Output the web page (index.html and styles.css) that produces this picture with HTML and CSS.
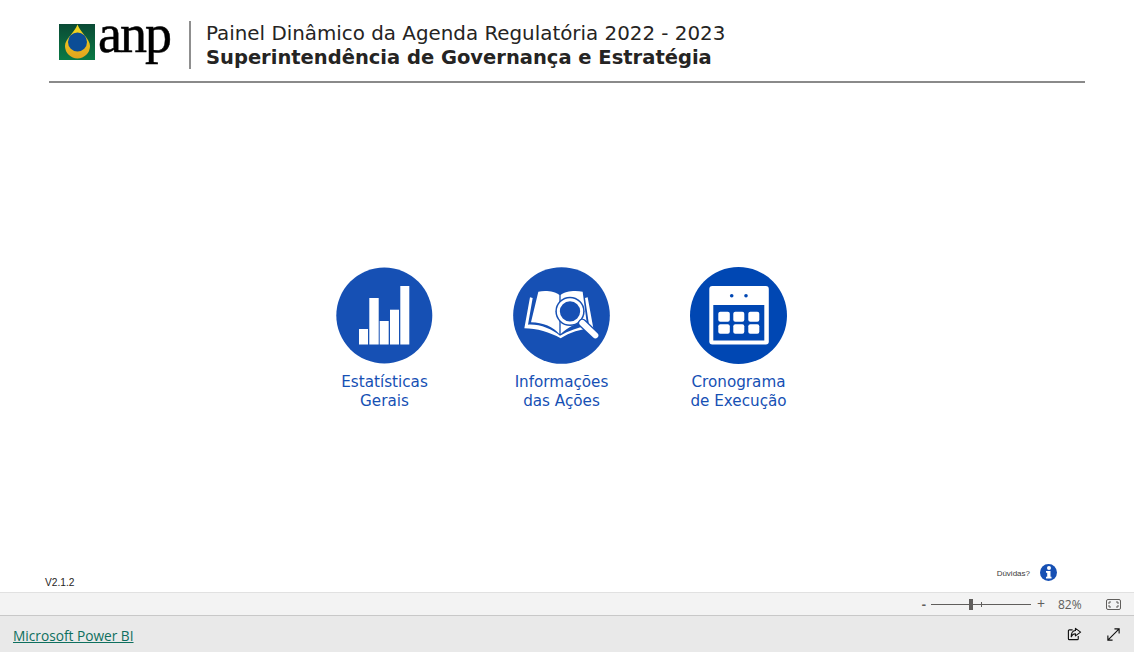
FILE: index.html
```html
<!DOCTYPE html>
<html lang="pt-BR">
<head>
<meta charset="utf-8">
<title>Painel Dinâmico da Agenda Regulatória</title>
<link rel="stylesheet" href="styles.css">
</head>
<body>
<div class="report">
  <header class="header">
    <div class="logo">
      <svg class="logo-mark" viewBox="0 0 36 36" aria-hidden="true">
        <defs>
          <linearGradient id="bg" x1="0" y1="0" x2="0" y2="1"><stop offset="0" stop-color="#0a4a35"/><stop offset="1" stop-color="#0a7a45"/></linearGradient>
          <linearGradient id="gold" x1="0" y1="0" x2="0" y2="1"><stop offset="0" stop-color="#f2dc20"/><stop offset="1" stop-color="#e2a31e"/></linearGradient>
        </defs>
        <rect width="36" height="36" fill="url(#bg)"/>
        <path d="M18.500 .5C16 8 6 15 6 22a12.500 12.500 0 0 0 25 0C31 15 21 8 18.500 .5Z" fill="url(#gold)"/>
        <circle cx="18.500" cy="18" r="9.500" fill="#0b4d96"/>
      </svg>
      <span class="logo-text">anp</span>
    </div>
    <div class="titles">
      <div class="title">Painel Dinâmico da Agenda Regulatória 2022 - 2023</div>
      <div class="subtitle">Superintendência de Governança e Estratégia</div>
    </div>
  </header>

  <main class="nav">
    <a class="card">
      <svg class="disc" viewBox="0 0 97 97" aria-hidden="true">
        <circle cx="48.300" cy="48.500" r="48" fill="#1650b4"/>
        <g fill="#fff">
          <rect x="23" y="62" width="9" height="15.500"/>
          <rect x="33.300" y="31" width="9.400" height="46.500"/>
          <rect x="43.700" y="54" width="9" height="23.500"/>
          <rect x="54" y="42.700" width="9" height="34.800"/>
          <rect x="64.300" y="19" width="9" height="58.500"/>
        </g>
      </svg>
      <span class="label">Estatísticas<br>Gerais</span>
    </a>
    <a class="card">
      <svg class="disc" viewBox="-21 -36 291 291" aria-hidden="true">
        <circle cx="124.500" cy="109.500" r="145" fill="#1650b4"/>
        <path d="M55 38C75 34 105 36 118 48V165C100 145 70 130 33 130Z" fill="#fff"/>
        <path d="M122 48C135 36 165 34 188 38L200 130C170 130 145 145 122 165Z" fill="#fff"/>
        <path d="M30 55 38 57 24 137C60 135 95 150 120 170 145 155 175 145 207 137L195 57 203 55 220 148C180 150 150 160 122 178 90 160 50 148 13 148Z" fill="#fff"/>
        <circle cx="150" cy="97" r="44" fill="#1650b4"/>
        <circle cx="150" cy="97" r="35" fill="#1650b4" stroke="#fff" stroke-width="9"/>
        <path d="M187 132 226 169" stroke="#1650b4" stroke-width="26" stroke-linecap="round"/>
        <path d="M187 132 226 169" stroke="#fff" stroke-width="18" stroke-linecap="round"/>
      </svg>
      <span class="label">Informações<br>das Ações</span>
    </a>
    <a class="card">
      <svg class="disc" viewBox="0 0 97 97" aria-hidden="true">
        <circle cx="48.500" cy="48.500" r="48.500" fill="#0047b3"/>
        <rect x="19.300" y="19" width="59.500" height="58.500" rx="3" fill="#fff"/>
        <rect x="23.300" y="38" width="51" height="35.500" fill="#0047b3"/>
        <circle cx="41.700" cy="28.700" r="1.800" fill="#0047b3"/>
        <circle cx="56" cy="28.700" r="1.800" fill="#0047b3"/>
        <g fill="#fff">
          <rect x="28.300" y="44.700" width="11.500" height="10" rx="2"/>
          <rect x="43.300" y="44.700" width="11" height="10" rx="2"/>
          <rect x="58.300" y="44.700" width="11" height="10" rx="2"/>
          <rect x="28.300" y="57.300" width="11.500" height="9.500" rx="2"/>
          <rect x="43.300" y="57.300" width="11" height="9.500" rx="2"/>
          <rect x="58.300" y="57.300" width="11" height="9.500" rx="2"/>
        </g>
      </svg>
      <span class="label">Cronograma<br>de Execução</span>
    </a>
  </main>

  <div class="report-foot">
    <span class="version">V2.1.2</span>
    <div class="help">
      <span class="help-text">Dúvidas?</span>
      <svg class="help-icon" viewBox="0 0 17 17" aria-hidden="true">
        <circle cx="8.500" cy="8.500" r="8.500" fill="#1650b4"/>
        <circle cx="9" cy="4" r="2" fill="#fff"/>
        <path d="M6 7H10.500V12.700H11.500V14.500H6V12.700H7.200V8.800H6Z" fill="#fff"/>
      </svg>
    </div>
  </div>
</div>

<div class="zoombar">
  <span class="zoom-btn">-</span>
  <div class="slider"><span class="tick"></span><span class="thumb"></span></div>
  <span class="zoom-btn plus">+</span>
  <span class="zoom-val">82%</span>
  <svg class="fit" viewBox="0 0 15 11" aria-hidden="true">
    <rect x=".5" y=".5" width="14" height="10" rx="1.500" fill="none" stroke="#605e5c"/>
    <path d="M3 5V3H5M10 3H12V5M12 6V8H10M5 8H3V6" fill="none" stroke="#605e5c"/>
  </svg>
</div>

<footer class="footer">
  <a class="pbi-link" href="#">Microsoft Power BI</a>
  <div class="foot-icons">
    <svg class="foot-icon" viewBox="0 0 16 16" aria-hidden="true">
      <path d="M6 3H2.500A1 1 0 0 0 1.500 4V12.500A1 1 0 0 0 2.500 13.500H11A1 1 0 0 0 12 12.500V9.500" fill="none" stroke="#111" stroke-width="1.200"/>
      <path d="M9 1.500 14.500 5.500 9 9.500V7.200C7 7.200 5.500 8 4.500 10.500 4.500 6.500 6.500 4 9 3.800Z" fill="none" stroke="#111" stroke-width="1.200" stroke-linejoin="round"/>
    </svg>
    <svg class="foot-icon" viewBox="0 0 16 16" aria-hidden="true">
      <path d="M2 14 14 2M9 2H14V7M2 9V14H7" fill="none" stroke="#111" stroke-width="1.200"/>
    </svg>
  </div>
</footer>
</body>
</html>
```

FILE: styles.css
```css
* { box-sizing: border-box; }
html, body { margin: 0; height: 100%; overflow: hidden; background: #fff; }
body { display: flex; flex-direction: column; height: 652px; font-family: "DejaVu Sans", Verdana, sans-serif; }

.report { height: 592px; display: flex; flex-direction: column; background: #fff; }

.header {
  margin: 0 49px;
  height: 83px;
  padding: 21px 0 12px 10px;
  border-bottom: 2px solid #8a8a8a;
  display: flex;
  align-items: stretch;
}
.logo { width: 132px; flex: none; display: flex; align-items: flex-start; padding-top: 3px; border-right: 2px solid #8f8f8f; margin-right: 15px; gap: 3px; }
.logo-mark { width: 36px; height: 36px; display: block; flex: none; }
.logo-text { font-family: "Liberation Serif", serif; font-size: 54px; line-height: 21px; letter-spacing: -2px; color: #000; -webkit-text-stroke: .5px #000; }
.titles { display: flex; flex-direction: column; padding-top: 1px; }
.title { font-size: 19.860px; line-height: 24px; color: #252423; }
.subtitle { font-size: 19.500px; line-height: 24px; font-weight: 700; color: #252423; }

.nav { flex: 1; display: flex; justify-content: center; gap: 80px; padding-top: 184px; padding-right: 11px; }
.card { width: 97px; display: flex; flex-direction: column; align-items: center; text-decoration: none; }
.disc { width: 97px; height: 97px; display: block; flex: none; }
.label { margin-top: 9px; font-size: 15.200px; line-height: 19px; color: #1650b4; text-align: center; white-space: nowrap; }

.report-foot { height: 32px; padding: 0 77px 0 45px; display: flex; justify-content: space-between; align-items: flex-start; }
.version { font-family: "Liberation Sans", Arial, sans-serif; font-size: 10.200px; line-height: 12px; margin-top: 17px; color: #252423; }
.help { display: flex; align-items: flex-start; gap: 10px; margin-top: 4px; }
.help-text { font-family: "Liberation Sans", Arial, sans-serif; font-size: 8px; line-height: 10px; margin-top: 5px; color: #3b3a39; }
.help-icon { width: 17px; height: 17px; display: block; }

.zoombar {
  height: 24px;
  background: #f3f3f3;
  border-top: 1px solid #e1e1e1;
  border-bottom: 1px solid #c8c8c8;
  display: flex;
  align-items: center;
  justify-content: flex-end;
  padding-right: 13px;
  color: #605e5c;
}
.zoom-btn { font-family: "Open Sans", sans-serif; font-size: 13px; line-height: 20px; font-weight: 700; }
.zoom-btn.plus { font-weight: 400; font-size: 14px; margin-left: 6px; }
.slider { position: relative; width: 100px; height: 1px; background: #605e5c; margin-left: 5px; }
.thumb { position: absolute; left: 38px; top: -5px; width: 4px; height: 11px; background: #605e5c; }
.tick { position: absolute; left: 50px; top: -2px; width: 1px; height: 5px; background: #605e5c; }
.zoom-val { font-family: "Open Sans", sans-serif; font-size: 12px; margin-left: 13px; width: 24px; }
.fit { width: 15px; height: 11px; margin-left: 24px; display: block; }

.footer { flex: 1; background: #e9e9e9; display: flex; align-items: center; justify-content: space-between; padding: 3px 13px 0 13px; }
.pbi-link { font-family: "Open Sans", sans-serif; font-size: 13.700px; color: #0e6f5e; text-decoration: underline; }
.foot-icons { display: flex; gap: 24px; margin-top: -3px; }
.foot-icon { width: 15px; height: 15px; display: block; }
```
